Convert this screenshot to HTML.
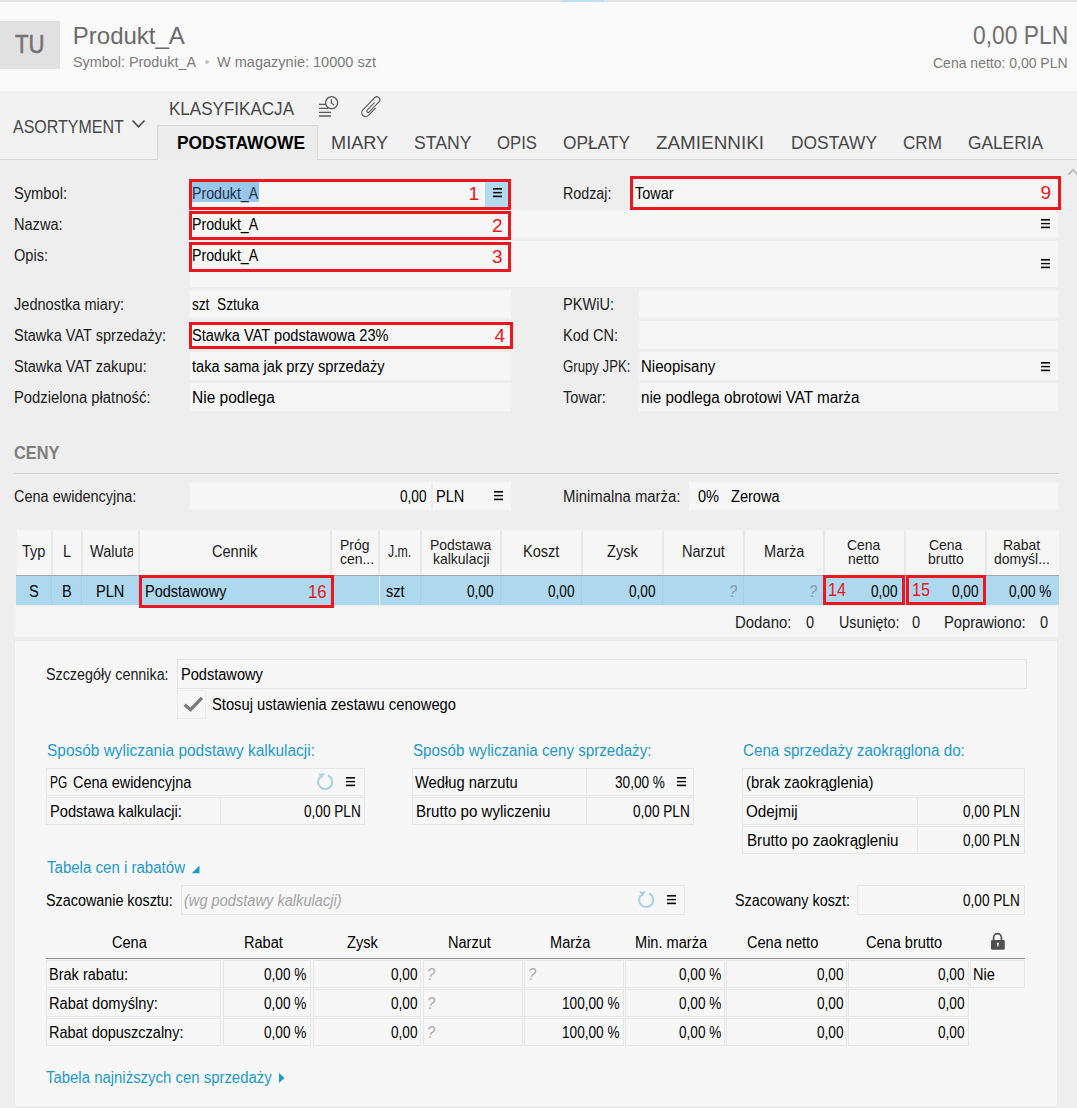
<!DOCTYPE html>
<html><head><meta charset="utf-8"><style>
html,body{margin:0;padding:0;width:1077px;height:1108px;overflow:hidden;background:#eeeeee;}
body{position:relative;font-family:"Liberation Sans", sans-serif;}
.b{position:absolute;box-sizing:border-box;}
.t{position:absolute;white-space:nowrap;line-height:1.117;transform-origin:0 0;}
</style></head><body>
<div class="b" style="left:0px;top:0px;width:1077px;height:1108px;background:#eeeeee;"></div>
<div class="b" style="left:0px;top:0px;width:1077px;height:91px;background:#fafafa;"></div>
<div class="b" style="left:0px;top:0px;width:1077px;height:2px;background:#e3e3e3;"></div>
<div class="b" style="left:561px;top:0px;width:43px;height:2px;background:#c3def0;"></div>
<div class="b" style="left:0px;top:21px;width:60px;height:48px;background:#e1e1e1;"></div>
<span class="t" style="left:14.55px;top:30.98px;color:#737373;font-size:25px;font-weight:400;transform:scaleX(0.8851);-webkit-text-stroke:0.6px #737373;">TU</span>
<span class="t" style="left:72.80px;top:23.48px;color:#6a6a6a;font-size:24px;font-weight:400;">Produkt_A</span>
<span class="t" style="left:72.70px;top:53.37px;color:#7b7b7b;font-size:15.5px;font-weight:400;transform:scaleX(0.9270);">Symbol: Produkt_A</span>
<div class="b" style="left:204.7px;top:59.7px;width:4.5px;height:4.5px;background:#c4c4c4;border-radius:50%;"></div>
<span class="t" style="left:217.00px;top:53.37px;color:#7b7b7b;font-size:15.5px;font-weight:400;transform:scaleX(0.9368);">W magazynie: 10000 szt</span>
<span class="t" style="left:972.70px;top:21.98px;color:#707070;font-size:25px;font-weight:400;transform:scaleX(0.9141);">0,00 PLN</span>
<span class="t" style="left:932.90px;top:54.82px;color:#7b7b7b;font-size:15px;font-weight:400;transform:scaleX(0.9330);">Cena netto: 0,00 PLN</span>
<div class="b" style="left:0px;top:91px;width:1077px;height:68px;background:#f2f2f2;"></div>
<div class="b" style="left:0px;top:159px;width:1077px;height:1px;background:#d6d6d6;"></div>
<div class="b" style="left:157px;top:125px;width:161px;height:35px;background:#ececec;border:1px solid #d6d6d6;border-bottom:none;"></div>
<span class="t" style="left:12.50px;top:116.41px;color:#474747;font-size:19px;font-weight:400;transform:scaleX(0.8411);">ASORTYMENT</span>
<svg class="b" style="left:131px;top:118px" width="16" height="12" viewBox="0 0 16 12"><path d="M1.5 2.5 L7.5 8.8 L13.5 2.5" fill="none" stroke="#4a4a4a" stroke-width="1.7"/></svg>
<span class="t" style="left:169.40px;top:99.31px;color:#474747;font-size:18px;font-weight:400;transform:scaleX(0.9466);">KLASYFIKACJA</span>
<svg class="b" style="left:317px;top:94px" width="24" height="24" viewBox="0 0 24 24"><path d="M2 10.4 H9 M2 14.3 H11 M2 18.3 H14 M2 22 H14" stroke="#5b5b5b" stroke-width="1.3"/><circle cx="14.6" cy="8.7" r="6" fill="#f2f2f2" stroke="#5b5b5b" stroke-width="1.3"/><path d="M14.4 5.2 V9.2 L17.2 11" fill="none" stroke="#5b5b5b" stroke-width="1.3"/></svg>
<svg class="b" style="left:356px;top:92px" width="30" height="30" viewBox="0 0 30 30"><g transform="translate(23.7 6.4) rotate(44) scale(0.93)"><path d="M -0.9 7.5 V 18.5 A 1.45 1.45 0 0 0 2 18.5 V 3.2 A 3.2 3.2 0 0 0 -4.4 3.2 V 21.5 A 4.2 4.2 0 0 0 4 21.5 V 11" fill="none" stroke="#5b5b5b" stroke-width="1.25" stroke-linecap="round"/></g></svg>
<span class="t" style="left:177.40px;top:133.11px;color:#000;font-size:18px;font-weight:700;transform:scaleX(0.9648);">PODSTAWOWE</span>
<span class="t" style="left:331.00px;top:133.11px;color:#474747;font-size:18px;font-weight:400;transform:scaleX(1.0090);">MIARY</span>
<span class="t" style="left:414.00px;top:133.11px;color:#474747;font-size:18px;font-weight:400;transform:scaleX(0.9815);">STANY</span>
<span class="t" style="left:497.00px;top:133.11px;color:#474747;font-size:18px;font-weight:400;transform:scaleX(0.9299);">OPIS</span>
<span class="t" style="left:563.00px;top:133.11px;color:#474747;font-size:18px;font-weight:400;transform:scaleX(0.9612);">OPŁATY</span>
<span class="t" style="left:656.00px;top:133.11px;color:#474747;font-size:18px;font-weight:400;transform:scaleX(1.0484);">ZAMIENNIKI</span>
<span class="t" style="left:791.00px;top:133.11px;color:#474747;font-size:18px;font-weight:400;transform:scaleX(0.9663);">DOSTAWY</span>
<span class="t" style="left:903.00px;top:133.11px;color:#474747;font-size:18px;font-weight:400;transform:scaleX(0.9512);">CRM</span>
<span class="t" style="left:968.00px;top:133.11px;color:#474747;font-size:18px;font-weight:400;transform:scaleX(0.9612);">GALERIA</span>
<svg class="b" style="left:1066px;top:166px" width="12" height="10" viewBox="0 0 12 10"><path d="M2.3 8.6 L6.9 3.9 L11.5 8.6" fill="none" stroke="#bababa" stroke-width="1.8"/></svg>
<div class="b" style="left:189px;top:179px;width:322px;height:30px;background:#f6f6f6;"></div>
<div class="b" style="left:485px;top:182px;width:23px;height:26px;background:#b3dbef;"></div>
<div class="b" style="left:192px;top:182px;width:67px;height:20px;background:#99c7ec;"></div>
<div class="b" style="left:190px;top:210px;width:868px;height:28px;background:#f6f6f6;"></div>
<div class="b" style="left:190px;top:241px;width:868px;height:46px;background:#f6f6f6;"></div>
<div class="b" style="left:630px;top:176px;width:431px;height:34px;background:#f6f6f6;"></div>
<div class="b" style="left:190px;top:290px;width:321px;height:28px;background:#f6f6f6;"></div>
<div class="b" style="left:639px;top:290px;width:419px;height:28px;background:#f6f6f6;"></div>
<div class="b" style="left:190px;top:321px;width:321px;height:28px;background:#f6f6f6;"></div>
<div class="b" style="left:639px;top:321px;width:419px;height:28px;background:#f6f6f6;"></div>
<div class="b" style="left:190px;top:352px;width:321px;height:28px;background:#f6f6f6;"></div>
<div class="b" style="left:639px;top:352px;width:419px;height:28px;background:#f6f6f6;"></div>
<div class="b" style="left:190px;top:383px;width:321px;height:28px;background:#f6f6f6;"></div>
<div class="b" style="left:639px;top:383px;width:419px;height:28px;background:#f6f6f6;"></div>
<span class="t" style="left:14.30px;top:185.12px;color:#1b1b1b;font-size:16px;font-weight:400;transform:scaleX(0.9170);">Symbol:</span>
<span class="t" style="left:14.30px;top:216.12px;color:#1b1b1b;font-size:16px;font-weight:400;transform:scaleX(0.9100);">Nazwa:</span>
<span class="t" style="left:14.30px;top:247.12px;color:#1b1b1b;font-size:16px;font-weight:400;transform:scaleX(0.9100);">Opis:</span>
<span class="t" style="left:14.30px;top:296.12px;color:#1b1b1b;font-size:16px;font-weight:400;transform:scaleX(0.9100);">Jednostka miary:</span>
<span class="t" style="left:14.30px;top:327.12px;color:#1b1b1b;font-size:16px;font-weight:400;transform:scaleX(0.9100);">Stawka VAT sprzedaży:</span>
<span class="t" style="left:14.30px;top:358.12px;color:#1b1b1b;font-size:16px;font-weight:400;transform:scaleX(0.9100);">Stawka VAT zakupu:</span>
<span class="t" style="left:14.30px;top:389.12px;color:#1b1b1b;font-size:16px;font-weight:400;transform:scaleX(0.9244);">Podzielona płatność:</span>
<span class="t" style="left:562.60px;top:185.12px;color:#1b1b1b;font-size:16px;font-weight:400;transform:scaleX(0.8922);">Rodzaj:</span>
<span class="t" style="left:562.60px;top:296.12px;color:#1b1b1b;font-size:16px;font-weight:400;transform:scaleX(0.9100);">PKWiU:</span>
<span class="t" style="left:562.60px;top:327.12px;color:#1b1b1b;font-size:16px;font-weight:400;transform:scaleX(0.9100);">Kod CN:</span>
<span class="t" style="left:562.60px;top:358.12px;color:#1b1b1b;font-size:16px;font-weight:400;transform:scaleX(0.8238);">Grupy JPK:</span>
<span class="t" style="left:562.60px;top:389.12px;color:#1b1b1b;font-size:16px;font-weight:400;transform:scaleX(0.9100);">Towar:</span>
<span class="t" style="left:192.40px;top:185.12px;color:#1d3047;font-size:16px;font-weight:400;transform:scaleX(0.8860);">Produkt_A</span>
<span class="t" style="left:192.40px;top:216.12px;color:#000;font-size:16px;font-weight:400;transform:scaleX(0.8860);">Produkt_A</span>
<span class="t" style="left:192.40px;top:247.12px;color:#000;font-size:16px;font-weight:400;transform:scaleX(0.8860);">Produkt_A</span>
<span class="t" style="left:192.40px;top:296.12px;color:#000;font-size:16px;font-weight:400;transform:scaleX(0.8507);">szt</span>
<span class="t" style="left:216.50px;top:296.12px;color:#000;font-size:16px;font-weight:400;transform:scaleX(0.8565);">Sztuka</span>
<span class="t" style="left:192.40px;top:327.12px;color:#000;font-size:16px;font-weight:400;transform:scaleX(0.9134);">Stawka VAT podstawowa 23%</span>
<span class="t" style="left:192.40px;top:358.12px;color:#000;font-size:16px;font-weight:400;transform:scaleX(0.9139);">taka sama jak przy sprzedaży</span>
<span class="t" style="left:192.40px;top:389.12px;color:#000;font-size:16px;font-weight:400;transform:scaleX(0.9695);">Nie podlega</span>
<span class="t" style="left:635.00px;top:185.12px;color:#000;font-size:16px;font-weight:400;transform:scaleX(0.9066);">Towar</span>
<span class="t" style="left:641.20px;top:358.12px;color:#000;font-size:16px;font-weight:400;transform:scaleX(0.9386);">Nieopisany</span>
<span class="t" style="left:641.20px;top:389.12px;color:#000;font-size:16px;font-weight:400;transform:scaleX(0.9518);">nie podlega obrotowi VAT marża</span>
<svg class="b" style="left:493px;top:188px" width="10" height="10" viewBox="0 0 10 10"><rect x="0" y="0" width="9" height="1.6" fill="#000"/><rect x="0" y="3.9" width="9" height="1.4" fill="#000"/><rect x="0" y="7.6" width="9" height="1.6" fill="#000"/></svg>
<svg class="b" style="left:1041px;top:219px" width="10" height="10" viewBox="0 0 10 10"><rect x="0" y="0" width="9" height="1.6" fill="#000"/><rect x="0" y="3.9" width="9" height="1.4" fill="#000"/><rect x="0" y="7.6" width="9" height="1.6" fill="#000"/></svg>
<svg class="b" style="left:1041px;top:259px" width="10" height="10" viewBox="0 0 10 10"><rect x="0" y="0" width="9" height="1.6" fill="#000"/><rect x="0" y="3.9" width="9" height="1.4" fill="#000"/><rect x="0" y="7.6" width="9" height="1.6" fill="#000"/></svg>
<svg class="b" style="left:1041px;top:362px" width="10" height="10" viewBox="0 0 10 10"><rect x="0" y="0" width="9" height="1.6" fill="#000"/><rect x="0" y="3.9" width="9" height="1.4" fill="#000"/><rect x="0" y="7.6" width="9" height="1.6" fill="#000"/></svg>
<div class="b" style="left:189px;top:179px;width:322px;height:31px;border:3px solid #ea1720;"></div>
<div class="b" style="left:189px;top:211px;width:322px;height:29px;border:3px solid #ea1720;"></div>
<div class="b" style="left:189px;top:242px;width:322px;height:30px;border:3px solid #ea1720;"></div>
<div class="b" style="left:630px;top:176px;width:431px;height:34px;border:3px solid #ea1720;"></div>
<div class="b" style="left:189px;top:322px;width:324px;height:27px;border:3px solid #ea1720;"></div>
<span class="t" style="left:468.42px;top:183.41px;color:#ea1720;font-size:19px;font-weight:400;">1</span>
<span class="t" style="left:491.92px;top:214.60px;color:#ea1720;font-size:19px;font-weight:400;">2</span>
<span class="t" style="left:491.92px;top:246.41px;color:#ea1720;font-size:19px;font-weight:400;">3</span>
<span class="t" style="left:494.42px;top:325.11px;color:#ea1720;font-size:19px;font-weight:400;">4</span>
<span class="t" style="left:1040.42px;top:182.10px;color:#ea1720;font-size:19px;font-weight:400;">9</span>
<span class="t" style="left:14.40px;top:442.41px;color:#7f7f7f;font-size:19px;font-weight:700;transform:scaleX(0.8618);">CENY</span>
<div class="b" style="left:14px;top:473px;width:1045px;height:1px;background:#d2d2d2;"></div>
<span class="t" style="left:14.30px;top:488.12px;color:#1b1b1b;font-size:16px;font-weight:400;transform:scaleX(0.9053);">Cena ewidencyjna:</span>
<div class="b" style="left:190px;top:482px;width:241px;height:28px;background:#f6f6f6;"></div>
<div class="b" style="left:433px;top:482px;width:78px;height:28px;background:#f6f6f6;"></div>
<span class="t" style="left:400.33px;top:488.12px;color:#000;font-size:16px;font-weight:400;transform:scaleX(0.8500);">0,00</span>
<span class="t" style="left:435.70px;top:488.12px;color:#000;font-size:16px;font-weight:400;transform:scaleX(0.9100);">PLN</span>
<svg class="b" style="left:494px;top:491px" width="10" height="10" viewBox="0 0 10 10"><rect x="0" y="0" width="9" height="1.6" fill="#000"/><rect x="0" y="3.9" width="9" height="1.4" fill="#000"/><rect x="0" y="7.6" width="9" height="1.6" fill="#000"/></svg>
<span class="t" style="left:562.60px;top:488.12px;color:#1b1b1b;font-size:16px;font-weight:400;transform:scaleX(0.9298);">Minimalna marża:</span>
<div class="b" style="left:689px;top:482px;width:369px;height:28px;background:#f6f6f6;"></div>
<span class="t" style="left:697.50px;top:488.12px;color:#000;font-size:16px;font-weight:400;transform:scaleX(0.9100);">0%</span>
<span class="t" style="left:730.50px;top:488.12px;color:#000;font-size:16px;font-weight:400;transform:scaleX(0.9100);">Zerowa</span>
<div class="b" style="left:17px;top:530px;width:1042px;height:45px;background:#f6f6f6;"></div>
<div class="b" style="left:51px;top:530px;width:2px;height:45px;background:#e9e9e9;"></div>
<div class="b" style="left:81px;top:530px;width:2px;height:45px;background:#e9e9e9;"></div>
<div class="b" style="left:138px;top:530px;width:2px;height:45px;background:#e9e9e9;"></div>
<div class="b" style="left:330px;top:530px;width:2px;height:45px;background:#e9e9e9;"></div>
<div class="b" style="left:378px;top:530px;width:2px;height:45px;background:#e9e9e9;"></div>
<div class="b" style="left:420px;top:530px;width:2px;height:45px;background:#e9e9e9;"></div>
<div class="b" style="left:500px;top:530px;width:2px;height:45px;background:#e9e9e9;"></div>
<div class="b" style="left:581px;top:530px;width:2px;height:45px;background:#e9e9e9;"></div>
<div class="b" style="left:662px;top:530px;width:2px;height:45px;background:#e9e9e9;"></div>
<div class="b" style="left:743px;top:530px;width:2px;height:45px;background:#e9e9e9;"></div>
<div class="b" style="left:823px;top:530px;width:2px;height:45px;background:#e9e9e9;"></div>
<div class="b" style="left:904px;top:530px;width:2px;height:45px;background:#e9e9e9;"></div>
<div class="b" style="left:985px;top:530px;width:2px;height:45px;background:#e9e9e9;"></div>
<div class="b" style="left:16px;top:575px;width:1043px;height:1px;background:#a9a6a3;"></div>
<div class="b" style="left:16px;top:576px;width:1043px;height:29px;background:#aed8ee;"></div>
<div class="b" style="left:51px;top:576px;width:1px;height:29px;background:#a3d0e7;"></div>
<div class="b" style="left:81px;top:576px;width:1px;height:29px;background:#a3d0e7;"></div>
<div class="b" style="left:138px;top:576px;width:1px;height:29px;background:#a3d0e7;"></div>
<div class="b" style="left:330px;top:576px;width:1px;height:29px;background:#a3d0e7;"></div>
<div class="b" style="left:378px;top:576px;width:1px;height:29px;background:#a3d0e7;"></div>
<div class="b" style="left:420px;top:576px;width:1px;height:29px;background:#a3d0e7;"></div>
<div class="b" style="left:500px;top:576px;width:1px;height:29px;background:#a3d0e7;"></div>
<div class="b" style="left:581px;top:576px;width:1px;height:29px;background:#a3d0e7;"></div>
<div class="b" style="left:662px;top:576px;width:1px;height:29px;background:#a3d0e7;"></div>
<div class="b" style="left:743px;top:576px;width:1px;height:29px;background:#a3d0e7;"></div>
<div class="b" style="left:823px;top:576px;width:1px;height:29px;background:#a3d0e7;"></div>
<div class="b" style="left:904px;top:576px;width:1px;height:29px;background:#a3d0e7;"></div>
<div class="b" style="left:985px;top:576px;width:1px;height:29px;background:#a3d0e7;"></div>
<div class="b" style="left:15px;top:606px;width:1043px;height:31px;background:#f6f6f6;"></div>
<div class="b" style="left:379px;top:576px;width:1px;height:29px;background:#eef5f9;"></div>
<span class="t" style="left:22.30px;top:543.12px;color:#1b1b1b;font-size:16px;font-weight:400;transform:scaleX(0.9100);">Typ</span>
<span class="t" style="left:62.95px;top:543.12px;color:#1b1b1b;font-size:16px;font-weight:400;transform:scaleX(0.9100);">L</span>
<div class="b" style="left:84px;top:535px;width:49px;height:30px;overflow:hidden">
<span class="t" style="left:5.70px;top:8.12px;color:#1b1b1b;font-size:16px;font-weight:400;transform:scaleX(0.9100);">Waluta</span>
</div>
<span class="t" style="left:212.34px;top:543.12px;color:#1b1b1b;font-size:16px;font-weight:400;transform:scaleX(0.9100);">Cennik</span>
<span class="t" style="left:339.50px;top:536.52px;color:#1b1b1b;font-size:15px;font-weight:400;transform:scaleX(0.9300);">Próg</span>
<span class="t" style="left:339.50px;top:551.02px;color:#1b1b1b;font-size:15px;font-weight:400;transform:scaleX(0.9300);">cen...</span>
<span class="t" style="left:388.25px;top:543.12px;color:#1b1b1b;font-size:16px;font-weight:400;transform:scaleX(0.7710);">J.m.</span>
<span class="t" style="left:430.37px;top:536.52px;color:#1b1b1b;font-size:15px;font-weight:400;transform:scaleX(0.9300);">Podstawa</span>
<span class="t" style="left:432.70px;top:551.02px;color:#1b1b1b;font-size:15px;font-weight:400;transform:scaleX(0.9300);">kalkulacji</span>
<span class="t" style="left:523.29px;top:543.12px;color:#1b1b1b;font-size:16px;font-weight:400;transform:scaleX(0.9100);">Koszt</span>
<span class="t" style="left:607.13px;top:543.12px;color:#1b1b1b;font-size:16px;font-weight:400;transform:scaleX(0.9100);">Zysk</span>
<span class="t" style="left:681.56px;top:543.12px;color:#1b1b1b;font-size:16px;font-weight:400;transform:scaleX(0.9100);">Narzut</span>
<span class="t" style="left:763.77px;top:543.12px;color:#1b1b1b;font-size:16px;font-weight:400;transform:scaleX(0.9100);">Marża</span>
<span class="t" style="left:847.33px;top:536.52px;color:#1b1b1b;font-size:15px;font-weight:400;transform:scaleX(0.9300);">Cena</span>
<span class="t" style="left:848.48px;top:551.02px;color:#1b1b1b;font-size:15px;font-weight:400;transform:scaleX(0.9300);">netto</span>
<span class="t" style="left:928.83px;top:536.52px;color:#1b1b1b;font-size:15px;font-weight:400;transform:scaleX(0.9300);">Cena</span>
<span class="t" style="left:927.66px;top:551.02px;color:#1b1b1b;font-size:15px;font-weight:400;transform:scaleX(0.9300);">brutto</span>
<span class="t" style="left:1003.39px;top:536.52px;color:#1b1b1b;font-size:15px;font-weight:400;transform:scaleX(0.9300);">Rabat</span>
<span class="t" style="left:994.09px;top:551.02px;color:#1b1b1b;font-size:15px;font-weight:400;transform:scaleX(0.9300);">domyśl...</span>
<span class="t" style="left:29.14px;top:583.12px;color:#000;font-size:16px;font-weight:400;transform:scaleX(0.9100);">S</span>
<span class="t" style="left:62.14px;top:583.12px;color:#000;font-size:16px;font-weight:400;transform:scaleX(0.9100);">B</span>
<span class="t" style="left:96.34px;top:583.12px;color:#000;font-size:16px;font-weight:400;transform:scaleX(0.9100);">PLN</span>
<span class="t" style="left:145.30px;top:583.12px;color:#000;font-size:16px;font-weight:400;transform:scaleX(0.9062);">Podstawowy</span>
<span class="t" style="left:386.00px;top:583.12px;color:#000;font-size:16px;font-weight:400;transform:scaleX(0.9100);">szt</span>
<span class="t" style="left:467.13px;top:583.12px;color:#000;font-size:16px;font-weight:400;transform:scaleX(0.8500);">0,00</span>
<span class="t" style="left:547.53px;top:583.12px;color:#000;font-size:16px;font-weight:400;transform:scaleX(0.8500);">0,00</span>
<span class="t" style="left:629.13px;top:583.12px;color:#000;font-size:16px;font-weight:400;transform:scaleX(0.8500);">0,00</span>
<span class="t" style="left:728.90px;top:583.12px;color:#8a9aa5;font-size:16px;font-weight:400;font-style:italic;transform:scaleX(0.9100);">?</span>
<span class="t" style="left:808.90px;top:583.12px;color:#8a9aa5;font-size:16px;font-weight:400;font-style:italic;transform:scaleX(0.9100);">?</span>
<span class="t" style="left:871.03px;top:583.12px;color:#000;font-size:16px;font-weight:400;transform:scaleX(0.8500);">0,00</span>
<span class="t" style="left:952.23px;top:583.12px;color:#000;font-size:16px;font-weight:400;transform:scaleX(0.8500);">0,00</span>
<span class="t" style="left:1009.16px;top:583.12px;color:#000;font-size:16px;font-weight:400;transform:scaleX(0.8500);">0,00 %</span>
<div class="b" style="left:139px;top:575px;width:195px;height:33px;border:3px solid #ea1720;"></div>
<div class="b" style="left:823px;top:575px;width:82px;height:30px;border:3px solid #ea1720;"></div>
<div class="b" style="left:906px;top:575px;width:80px;height:30px;border:3px solid #ea1720;"></div>
<span class="t" style="left:308.30px;top:581.40px;color:#ea1720;font-size:19px;font-weight:400;transform:scaleX(0.8846);">16</span>
<span class="t" style="left:828.00px;top:579.11px;color:#ea1720;font-size:19px;font-weight:400;transform:scaleX(0.8514);">14</span>
<span class="t" style="left:912.00px;top:579.11px;color:#ea1720;font-size:19px;font-weight:400;transform:scaleX(0.8514);">15</span>
<span class="t" style="left:734.80px;top:614.12px;color:#1b1b1b;font-size:16px;font-weight:400;transform:scaleX(0.9322);">Dodano:</span>
<span class="t" style="left:806.00px;top:614.12px;color:#1b1b1b;font-size:16px;font-weight:400;transform:scaleX(0.9100);">0</span>
<span class="t" style="left:838.60px;top:614.12px;color:#1b1b1b;font-size:16px;font-weight:400;transform:scaleX(0.8951);">Usunięto:</span>
<span class="t" style="left:912.00px;top:614.12px;color:#1b1b1b;font-size:16px;font-weight:400;transform:scaleX(0.9100);">0</span>
<span class="t" style="left:944.00px;top:614.12px;color:#1b1b1b;font-size:16px;font-weight:400;transform:scaleX(0.9185);">Poprawiono:</span>
<span class="t" style="left:1040.00px;top:614.12px;color:#1b1b1b;font-size:16px;font-weight:400;transform:scaleX(0.9100);">0</span>
<div class="b" style="left:14px;top:640px;width:1044px;height:467px;background:#f7f7f7;border:1px solid #eaeaea;"></div>
<span class="t" style="left:46.40px;top:666.12px;color:#1b1b1b;font-size:16px;font-weight:400;transform:scaleX(0.8951);">Szczegóły cennika:</span>
<div class="b" style="left:177px;top:659px;width:850px;height:30px;border:1px solid #e4e4e4;"></div>
<span class="t" style="left:181.00px;top:666.12px;color:#000;font-size:16px;font-weight:400;transform:scaleX(0.9106);">Podstawowy</span>
<div class="b" style="left:177px;top:690px;width:29px;height:29px;border:1px solid #ebebeb;"></div>
<svg class="b" style="left:182px;top:695px" width="22" height="18" viewBox="0 0 22 18"><path d="M2.6 9.8 L8.5 14.8 L19.9 2.8" fill="none" stroke="#7a7a7a" stroke-width="3.3"/></svg>
<span class="t" style="left:211.70px;top:696.12px;color:#000;font-size:16px;font-weight:400;transform:scaleX(0.9206);">Stosuj ustawienia zestawu cenowego</span>
<span class="t" style="left:47.00px;top:742.12px;color:#1f99c6;font-size:16px;font-weight:400;transform:scaleX(0.9659);">Sposób wyliczania podstawy kalkulacji:</span>
<span class="t" style="left:412.50px;top:742.12px;color:#1f99c6;font-size:16px;font-weight:400;transform:scaleX(0.9476);">Sposób wyliczania ceny sprzedaży:</span>
<span class="t" style="left:742.50px;top:742.12px;color:#1f99c6;font-size:16px;font-weight:400;transform:scaleX(0.9482);">Cena sprzedaży zaokrąglona do:</span>
<div class="b" style="left:46px;top:768px;width:319px;height:28px;border:1px solid #e6e6e6;"></div>
<div class="b" style="left:46px;top:797px;width:175px;height:28px;border:1px solid #e6e6e6;"></div>
<div class="b" style="left:220px;top:797px;width:145px;height:28px;border:1px solid #e6e6e6;"></div>
<span class="t" style="left:49.50px;top:774.12px;color:#000;font-size:16px;font-weight:400;transform:scaleX(0.7438);">PG</span>
<span class="t" style="left:73.20px;top:774.12px;color:#000;font-size:16px;font-weight:400;transform:scaleX(0.9048);">Cena ewidencyjna</span>
<svg class="b" style="left:314.9px;top:771.8px" width="20" height="20" viewBox="-10 -10 20 20"><path d="M 3.0 -6.5 A 7.1 7.1 0 1 1 -4.3 -5.5" fill="none" stroke="#a9d3e3" stroke-width="2"/><path d="M -6.8 -8.6 L 0.0 -8.6 L -3.4 -3.4 Z" fill="#a9d3e3"/></svg>
<svg class="b" style="left:346px;top:777px" width="10" height="10" viewBox="0 0 10 10"><rect x="0" y="0" width="9" height="1.6" fill="#000"/><rect x="0" y="3.9" width="9" height="1.4" fill="#000"/><rect x="0" y="7.6" width="9" height="1.6" fill="#000"/></svg>
<span class="t" style="left:50.00px;top:803.12px;color:#000;font-size:16px;font-weight:400;transform:scaleX(0.9148);">Podstawa kalkulacji:</span>
<span class="t" style="left:303.79px;top:803.12px;color:#000;font-size:16px;font-weight:400;transform:scaleX(0.8500);">0,00 PLN</span>
<div class="b" style="left:412px;top:768px;width:175px;height:28px;border:1px solid #e6e6e6;"></div>
<div class="b" style="left:586px;top:768px;width:108px;height:28px;border:1px solid #e6e6e6;"></div>
<div class="b" style="left:412px;top:797px;width:175px;height:28px;border:1px solid #e6e6e6;"></div>
<div class="b" style="left:586px;top:797px;width:108px;height:28px;border:1px solid #e6e6e6;"></div>
<span class="t" style="left:415.40px;top:774.12px;color:#000;font-size:16px;font-weight:400;transform:scaleX(0.9197);">Według narzutu</span>
<span class="t" style="left:615.39px;top:774.12px;color:#000;font-size:16px;font-weight:400;transform:scaleX(0.8500);">30,00 %</span>
<svg class="b" style="left:677px;top:777px" width="10" height="10" viewBox="0 0 10 10"><rect x="0" y="0" width="9" height="1.6" fill="#000"/><rect x="0" y="3.9" width="9" height="1.4" fill="#000"/><rect x="0" y="7.6" width="9" height="1.6" fill="#000"/></svg>
<span class="t" style="left:416.30px;top:803.12px;color:#000;font-size:16px;font-weight:400;transform:scaleX(0.9438);">Brutto po wyliczeniu</span>
<span class="t" style="left:633.29px;top:803.12px;color:#000;font-size:16px;font-weight:400;transform:scaleX(0.8500);">0,00 PLN</span>
<div class="b" style="left:742px;top:768px;width:283px;height:28px;border:1px solid #e6e6e6;"></div>
<div class="b" style="left:742px;top:797px;width:176px;height:28px;border:1px solid #e6e6e6;"></div>
<div class="b" style="left:917px;top:797px;width:108px;height:28px;border:1px solid #e6e6e6;"></div>
<div class="b" style="left:742px;top:826px;width:176px;height:28px;border:1px solid #e6e6e6;"></div>
<div class="b" style="left:917px;top:826px;width:108px;height:28px;border:1px solid #e6e6e6;"></div>
<span class="t" style="left:745.50px;top:774.12px;color:#000;font-size:16px;font-weight:400;transform:scaleX(0.9310);">(brak zaokrąglenia)</span>
<span class="t" style="left:745.50px;top:803.12px;color:#000;font-size:16px;font-weight:400;transform:scaleX(0.9533);">Odejmij</span>
<span class="t" style="left:963.29px;top:803.12px;color:#000;font-size:16px;font-weight:400;transform:scaleX(0.8500);">0,00 PLN</span>
<span class="t" style="left:746.50px;top:832.12px;color:#000;font-size:16px;font-weight:400;transform:scaleX(0.9462);">Brutto po zaokrągleniu</span>
<span class="t" style="left:963.29px;top:832.12px;color:#000;font-size:16px;font-weight:400;transform:scaleX(0.8500);">0,00 PLN</span>
<span class="t" style="left:47.00px;top:859.12px;color:#1f99c6;font-size:16px;font-weight:400;transform:scaleX(0.9403);">Tabela cen i rabatów</span>
<svg class="b" style="left:191px;top:865px" width="10" height="9" viewBox="0 0 10 9"><path d="M0.8 8.2 L8.5 8.2 L8.5 0.4 Z" fill="#1f99c6"/></svg>
<span class="t" style="left:46.20px;top:892.12px;color:#000;font-size:16px;font-weight:400;transform:scaleX(0.8967);">Szacowanie kosztu:</span>
<div class="b" style="left:181px;top:885px;width:504px;height:30px;border:1px solid #e6e6e6;"></div>
<span class="t" style="left:184.40px;top:892.12px;color:#a3a3a3;font-size:16px;font-weight:400;font-style:italic;transform:scaleX(0.9135);">(wg podstawy kalkulacji)</span>
<svg class="b" style="left:636px;top:889.5px" width="20" height="20" viewBox="-10 -10 20 20"><path d="M 3.0 -6.5 A 7.1 7.1 0 1 1 -4.3 -5.5" fill="none" stroke="#a9d3e3" stroke-width="2"/><path d="M -6.8 -8.6 L 0.0 -8.6 L -3.4 -3.4 Z" fill="#a9d3e3"/></svg>
<svg class="b" style="left:667px;top:895px" width="10" height="10" viewBox="0 0 10 10"><rect x="0" y="0" width="9" height="1.6" fill="#000"/><rect x="0" y="3.9" width="9" height="1.4" fill="#000"/><rect x="0" y="7.6" width="9" height="1.6" fill="#000"/></svg>
<span class="t" style="left:735.00px;top:892.12px;color:#000;font-size:16px;font-weight:400;transform:scaleX(0.8980);">Szacowany koszt:</span>
<div class="b" style="left:857px;top:885px;width:168px;height:30px;border:1px solid #e6e6e6;"></div>
<span class="t" style="left:963.29px;top:892.12px;color:#000;font-size:16px;font-weight:400;transform:scaleX(0.8500);">0,00 PLN</span>
<span class="t" style="left:111.60px;top:934.12px;color:#000;font-size:16px;font-weight:400;transform:scaleX(0.9100);">Cena</span>
<span class="t" style="left:244.07px;top:934.12px;color:#000;font-size:16px;font-weight:400;transform:scaleX(0.9100);">Rabat</span>
<span class="t" style="left:347.13px;top:934.12px;color:#000;font-size:16px;font-weight:400;transform:scaleX(0.9100);">Zysk</span>
<span class="t" style="left:447.56px;top:934.12px;color:#000;font-size:16px;font-weight:400;transform:scaleX(0.9100);">Narzut</span>
<span class="t" style="left:549.77px;top:934.12px;color:#000;font-size:16px;font-weight:400;transform:scaleX(0.9100);">Marża</span>
<span class="t" style="left:635.00px;top:934.12px;color:#000;font-size:16px;font-weight:400;transform:scaleX(0.9100);">Min. marża</span>
<span class="t" style="left:746.88px;top:934.12px;color:#000;font-size:16px;font-weight:400;transform:scaleX(0.9100);">Cena netto</span>
<span class="t" style="left:865.96px;top:934.12px;color:#000;font-size:16px;font-weight:400;transform:scaleX(0.9100);">Cena brutto</span>
<svg class="b" style="left:989px;top:931px" width="17" height="20" viewBox="0 0 17 20"><path d="M4.6 9.5 V6.6 A3.9 3.9 0 0 1 12.4 6.6 V9.5" fill="none" stroke="#505050" stroke-width="1.7"/><rect x="2" y="9" width="13.8" height="9.8" rx="1.3" fill="#505050"/><circle cx="8.9" cy="12.6" r="1.1" fill="#f6f6f6"/><rect x="8.3" y="12.8" width="1.2" height="2.8" fill="#f6f6f6"/></svg>
<div class="b" style="left:46px;top:957.5px;width:979px;height:1.5px;background:#8e8e8e;"></div>
<div class="b" style="left:46px;top:960px;width:175px;height:28px;border:1px solid #e6e6e6;"></div>
<div class="b" style="left:223px;top:960px;width:88px;height:28px;border:1px solid #e6e6e6;"></div>
<div class="b" style="left:313px;top:960px;width:108px;height:28px;border:1px solid #e6e6e6;"></div>
<div class="b" style="left:423px;top:960px;width:100px;height:28px;border:1px solid #e6e6e6;"></div>
<div class="b" style="left:524px;top:960px;width:100px;height:28px;border:1px solid #e6e6e6;"></div>
<div class="b" style="left:625px;top:960px;width:100px;height:28px;border:1px solid #e6e6e6;"></div>
<div class="b" style="left:726px;top:960px;width:121px;height:28px;border:1px solid #e6e6e6;"></div>
<div class="b" style="left:848px;top:960px;width:121px;height:28px;border:1px solid #e6e6e6;"></div>
<div class="b" style="left:46px;top:989px;width:175px;height:28px;border:1px solid #e6e6e6;"></div>
<div class="b" style="left:223px;top:989px;width:88px;height:28px;border:1px solid #e6e6e6;"></div>
<div class="b" style="left:313px;top:989px;width:108px;height:28px;border:1px solid #e6e6e6;"></div>
<div class="b" style="left:423px;top:989px;width:100px;height:28px;border:1px solid #e6e6e6;"></div>
<div class="b" style="left:524px;top:989px;width:100px;height:28px;border:1px solid #e6e6e6;"></div>
<div class="b" style="left:625px;top:989px;width:100px;height:28px;border:1px solid #e6e6e6;"></div>
<div class="b" style="left:726px;top:989px;width:121px;height:28px;border:1px solid #e6e6e6;"></div>
<div class="b" style="left:848px;top:989px;width:121px;height:28px;border:1px solid #e6e6e6;"></div>
<div class="b" style="left:46px;top:1018px;width:175px;height:28px;border:1px solid #e6e6e6;"></div>
<div class="b" style="left:223px;top:1018px;width:88px;height:28px;border:1px solid #e6e6e6;"></div>
<div class="b" style="left:313px;top:1018px;width:108px;height:28px;border:1px solid #e6e6e6;"></div>
<div class="b" style="left:423px;top:1018px;width:100px;height:28px;border:1px solid #e6e6e6;"></div>
<div class="b" style="left:524px;top:1018px;width:100px;height:28px;border:1px solid #e6e6e6;"></div>
<div class="b" style="left:625px;top:1018px;width:100px;height:28px;border:1px solid #e6e6e6;"></div>
<div class="b" style="left:726px;top:1018px;width:121px;height:28px;border:1px solid #e6e6e6;"></div>
<div class="b" style="left:848px;top:1018px;width:121px;height:28px;border:1px solid #e6e6e6;"></div>
<div class="b" style="left:970px;top:960px;width:55px;height:28px;border:1px solid #e6e6e6;"></div>
<span class="t" style="left:49.30px;top:966.12px;color:#000;font-size:16px;font-weight:400;transform:scaleX(0.9076);">Brak rabatu:</span>
<span class="t" style="left:264.36px;top:966.12px;color:#000;font-size:16px;font-weight:400;transform:scaleX(0.8500);">0,00 %</span>
<span class="t" style="left:390.53px;top:966.12px;color:#000;font-size:16px;font-weight:400;transform:scaleX(0.8500);">0,00</span>
<span class="t" style="left:426.80px;top:966.12px;color:#ababab;font-size:16px;font-weight:400;font-style:italic;transform:scaleX(0.9100);">?</span>
<span class="t" style="left:528.00px;top:966.12px;color:#ababab;font-size:16px;font-weight:400;font-style:italic;transform:scaleX(0.9100);">?</span>
<span class="t" style="left:679.26px;top:966.12px;color:#000;font-size:16px;font-weight:400;transform:scaleX(0.8500);">0,00 %</span>
<span class="t" style="left:816.53px;top:966.12px;color:#000;font-size:16px;font-weight:400;transform:scaleX(0.8500);">0,00</span>
<span class="t" style="left:938.43px;top:966.12px;color:#000;font-size:16px;font-weight:400;transform:scaleX(0.8500);">0,00</span>
<span class="t" style="left:49.30px;top:995.12px;color:#000;font-size:16px;font-weight:400;transform:scaleX(0.9130);">Rabat domyślny:</span>
<span class="t" style="left:264.36px;top:995.12px;color:#000;font-size:16px;font-weight:400;transform:scaleX(0.8500);">0,00 %</span>
<span class="t" style="left:390.53px;top:995.12px;color:#000;font-size:16px;font-weight:400;transform:scaleX(0.8500);">0,00</span>
<span class="t" style="left:426.80px;top:995.12px;color:#ababab;font-size:16px;font-weight:400;font-style:italic;transform:scaleX(0.9100);">?</span>
<span class="t" style="left:562.43px;top:995.12px;color:#000;font-size:16px;font-weight:400;transform:scaleX(0.8500);">100,00 %</span>
<span class="t" style="left:679.26px;top:995.12px;color:#000;font-size:16px;font-weight:400;transform:scaleX(0.8500);">0,00 %</span>
<span class="t" style="left:816.53px;top:995.12px;color:#000;font-size:16px;font-weight:400;transform:scaleX(0.8500);">0,00</span>
<span class="t" style="left:938.43px;top:995.12px;color:#000;font-size:16px;font-weight:400;transform:scaleX(0.8500);">0,00</span>
<span class="t" style="left:49.30px;top:1024.12px;color:#000;font-size:16px;font-weight:400;transform:scaleX(0.9049);">Rabat dopuszczalny:</span>
<span class="t" style="left:264.36px;top:1024.12px;color:#000;font-size:16px;font-weight:400;transform:scaleX(0.8500);">0,00 %</span>
<span class="t" style="left:390.53px;top:1024.12px;color:#000;font-size:16px;font-weight:400;transform:scaleX(0.8500);">0,00</span>
<span class="t" style="left:426.80px;top:1024.12px;color:#ababab;font-size:16px;font-weight:400;font-style:italic;transform:scaleX(0.9100);">?</span>
<span class="t" style="left:562.43px;top:1024.12px;color:#000;font-size:16px;font-weight:400;transform:scaleX(0.8500);">100,00 %</span>
<span class="t" style="left:679.26px;top:1024.12px;color:#000;font-size:16px;font-weight:400;transform:scaleX(0.8500);">0,00 %</span>
<span class="t" style="left:816.53px;top:1024.12px;color:#000;font-size:16px;font-weight:400;transform:scaleX(0.8500);">0,00</span>
<span class="t" style="left:938.43px;top:1024.12px;color:#000;font-size:16px;font-weight:400;transform:scaleX(0.8500);">0,00</span>
<span class="t" style="left:973.40px;top:966.12px;color:#000;font-size:16px;font-weight:400;transform:scaleX(0.9100);">Nie</span>
<span class="t" style="left:46.30px;top:1069.12px;color:#1f99c6;font-size:16px;font-weight:400;transform:scaleX(0.9330);">Tabela najniższych cen sprzedaży</span>
<svg class="b" style="left:278px;top:1072px" width="8" height="12" viewBox="0 0 8 12"><path d="M1 1 L6.5 6 L1 11 Z" fill="#1f99c6"/></svg>
</body></html>
